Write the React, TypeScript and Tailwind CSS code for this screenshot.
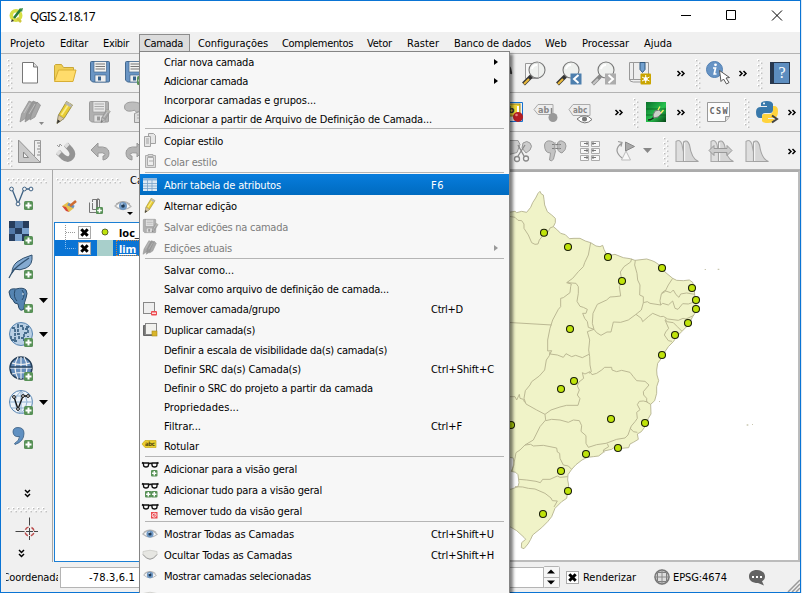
import { useLayoutEffect, useRef, useState } from "react";
import type { ReactNode } from "react";

/* A text run tracked in or out until it fills exactly w pixels. */
function Fit({ w, children }: { w: number; children: string }) {
  const ref = useRef<HTMLSpanElement>(null);
  const [tracking, setTracking] = useState(0);
  useLayoutEffect(() => {
    if (ref.current) setTracking((w - ref.current.getBoundingClientRect().width) / children.length);
  }, [w, children]);
  return (
    <span ref={ref} className="inline-block pt-[2px]" style={{ letterSpacing: `${tracking}px` }}>
      {children}
    </span>
  );
}

/* Every glyph slot uses window coordinates for its viewBox, so neighbouring slots tile seamlessly. */
function Slot({ x, y, w, h, children }: { x: number; y: number; w: number; h: number; children?: ReactNode }) {
  return (
    <svg className="block shrink-0" width={w} height={h} viewBox={`${x} ${y} ${w} ${h}`}>
      {children}
    </svg>
  );
}

function Grip({ x, y, n = 6 }: { x: number; y: number; n?: number }) {
  return (
    <g>
      {Array.from({ length: n }, (_, i) => (
        <g key={i}>
          <rect x={x} y={y + i * 5} width="2" height="2" fill="#fff" />
          <rect x={x + 1} y={y + 1 + i * 5} width="1.4" height="1.4" fill="#bcbcbc" />
          <rect x={x + 3} y={y + 2.5 + i * 5} width="2" height="2" fill="#fff" />
          <rect x={x + 4} y={y + 3.5 + i * 5} width="1.4" height="1.4" fill="#bcbcbc" />
        </g>
      ))}
    </g>
  );
}

function HGrip({ x, y, n }: { x: number; y: number; n: number }) {
  return (
    <g>
      {Array.from({ length: n }, (_, i) => (
        <g key={i}>
          <rect x={x + i * 5} y={y} width="2" height="2" fill="#fff" />
          <rect x={x + 1 + i * 5} y={y + 1} width="1.4" height="1.4" fill="#bcbcbc" />
          <rect x={x + 2.5 + i * 5} y={y + 3} width="2" height="2" fill="#fff" />
          <rect x={x + 3.5 + i * 5} y={y + 4} width="1.4" height="1.4" fill="#bcbcbc" />
        </g>
      ))}
    </g>
  );
}

function More({ x, y }: { x: number; y: number }) {
  return <path d={`M${x} ${y - 2.5}l2.5 2.5l-2.5 2.5M${x + 4} ${y - 2.5}l2.5 2.5l-2.5 2.5`} fill="none" stroke="#000" strokeWidth="1.5" />;
}

function MoreDown({ x, y }: { x: number; y: number }) {
  return <path d={`M${x - 2.5} ${y}l2.5 2.5l2.5 -2.5M${x - 2.5} ${y + 4}l2.5 2.5l2.5 -2.5`} fill="none" stroke="#000" strokeWidth="1.5" />;
}

function Plus({ x, y, s = 9 }: { x: number; y: number; s?: number }) {
  return (
    <g transform={`translate(${x} ${y}) scale(${s / 9})`}>
      <rect width="9" height="9" rx="1.5" fill="#589157" />
      <path d="M4.5 1.5v6M1.5 4.5h6" stroke="#fff" strokeWidth="2" />
    </g>
  );
}

function Floppy({ x, y, s = 1, gray = false }: { x: number; y: number; s?: number; gray?: boolean }) {
  const edge = gray ? "#9a9a9a" : "#43688f";
  const body = gray ? "#b0b0b0" : "#6a95c4";
  return (
    <g transform={`translate(${x} ${y}) scale(${s})`}>
      <path d="M.5 1.5q0-1 1-1h17q1 0 1 1v18.500q0 1-1 1h-16l-2-2z" fill={body} stroke={edge} />
      <rect x="4" y="0.500" width="12.500" height="10.500" fill={gray ? "#e6e6e6" : "#f2f2f0"} stroke={edge} strokeWidth=".7" />
      <path d="M5.500 3h9.500M5.500 5.500h9.500M5.500 8h9.500" stroke={gray ? "#aaa" : "#777"} />
      <rect x="5" y="14" width="11" height="7" fill={gray ? "#e0e0e0" : "#eee"} stroke={edge} strokeWidth=".7" />
      <rect x="8" y="15.500" width="3" height="4" fill={gray ? "#999" : "#35618f"} />
    </g>
  );
}

function Pencil({ x, y, s = 1, gray = false }: { x: number; y: number; s?: number; gray?: boolean }) {
  return (
    <g transform={`translate(${x} ${y}) scale(${s})`}>
      <path d="M0 22.500L1.500 14L9.500 .5l6 3.500L7 17.500z" fill={gray ? "#a3a3a3" : "#e8cc33"} stroke={gray ? "#898989" : "#8d8135"} strokeWidth=".8" />
      <path d="M4.500 14L12.500 2" stroke={gray ? "#c9c9c9" : "#f9ec8b"} strokeWidth="1.800" />
      <path d="M9.500 .5l6 3.500-1.600 2.600-6-3.600z" fill="#b6b6b0" />
      <path d="M1.500 14l5.500 3.500L0 22.500z" fill={gray ? "#bbb" : "#d8c6a0"} stroke="#777" strokeWidth=".5" />
      <path d="M0 22.500l.7-4 2.600 1.700z" fill="#333" fillOpacity={gray ? 0.4 : 1} />
    </g>
  );
}

function Pencils({ x, y, s = 1 }: { x: number; y: number; s?: number }) {
  return (
    <g transform={`translate(${x} ${y}) scale(${s})`} fill="#a8a8a8" stroke="#8c8c8c" strokeWidth=".7">
      <path d="M0 22l1.500-8L9 1l5 2L6 18z" />
      <path d="M5 22l1.500-8L13 1l5 2L11 18z" fill="#999" />
      <path d="M10 20l1.500-6L17 2l3.500 3L15 17z" />
      <path d="M4 13L10 3M9 14L15 4" stroke="#cecece" />
    </g>
  );
}

function Magnifier({ x, y, gray = false }: { x: number; y: number; gray?: boolean }) {
  return (
    <g>
      <path d={`M${x - 5.500} ${y + 6}l-8 8`} stroke={gray ? "#888" : "#333"} strokeWidth="4" />
      <path d={`M${x - 8} ${y + 9}l-5 5`} stroke={gray ? "#c4c4c4" : "#e8b83b"} strokeWidth="2.200" />
      <circle cx={x} cy={y} r="8" fill="#eef0ed" fillOpacity=".86" stroke="#777" strokeWidth="1.100" />
      <path d={`M${x - 5} ${y - 1}q1-4 5-4`} fill="none" stroke="#fff" strokeWidth="2" />
    </g>
  );
}

function Eye({ x, y, s = 1, closed = false }: { x: number; y: number; s?: number; closed?: boolean }) {
  return (
    <g transform={`translate(${x} ${y}) scale(${s})`}>
      {closed ? (
        <g>
          <path d="M-7-3.500Q0-6 7-3.500L7 0Q0 8-7 0z" fill="#e6e6e2" stroke="#c8c8c4" strokeWidth=".7" />
          <path d="M-7-.5Q0 9 7-.5" fill="none" stroke="#999" strokeWidth=".9" />
        </g>
      ) : (
        <g>
          <path d="M-8 0Q0-8 8 .5Q0 7-8 0z" fill="#fafafa" stroke="#b6b6b6" strokeWidth="1.200" />
          <circle r="4" fill="#6f98c4" />
          <circle r="1.800" fill="#203850" />
          <circle cx="-1" cy="-2" r=".8" fill="#dceaf8" />
          <path d="M-7-2Q0-7 7-2" fill="none" stroke="#999" strokeWidth=".8" />
        </g>
      )}
    </g>
  );
}

function Gripper({ x, w, y, h, gx }: { x: number; w: number; y: number; h: number; gx: number }) {
  return (
    <Slot x={x} y={y} w={w} h={h}>
      <Grip x={gx} y={y + 5} />
    </Slot>
  );
}

function FileBar() {
  const r = { y: 54, h: 38 };
  return (
    <div className="flex h-[39px] border-t border-[#b3b3b3]">
      <Gripper x={1} w={17} gx={7} {...r} />
      <Slot x={18} w={30} {...r}>
        <path d="M22.500 62.500h11l4 4.500v16h-15z" fill="#fff" stroke="#777" />
        <path d="M33.500 62.500v4.500h4" fill="#ddd" stroke="#777" />
      </Slot>
      <Slot x={48} w={36} {...r}>
        <path d="M54.500 80.500v-15l1-1h6l2 3h10v3" fill="#f0cf54" stroke="#c9a738" />
        <path d="M54.500 81.500l4-11.500h17.500l-3 11.500z" fill="#ffdc6b" stroke="#d8ae34" />
      </Slot>
      <Slot x={84} w={34} {...r}><Floppy x={90} y={61} /></Slot>
      <Slot x={118} w={391} {...r}><Floppy x={125} y={61} /><Plus x={137} y={76} /></Slot>
      <Slot x={509} w={41} {...r}>
        <path d="M504 62q8 5 7 12" fill="none" stroke="#444" strokeWidth="2" />
        <path d="M525.500 63.500h13v15h-13z" fill="#f7f7f7" stroke="#999" />
        <Magnifier x={537} y={70} />
        <path d="M538.500 62.500v15" stroke="#ccc" />
      </Slot>
      <Slot x={550} w={36} {...r}>
        <Magnifier x={571} y={70} />
        <rect x="570.500" y="73.500" width="11" height="11" fill="#4d7fae" /><path d="M578.500 75l-4.500 4 4.500 4" fill="none" stroke="#fff" strokeWidth="2" />
      </Slot>
      <Slot x={586} w={36} {...r}>
        <Magnifier x={606} y={70} gray />
        <rect x="605" y="73.500" width="11" height="11" fill="#adadad" /><path d="M608.500 75l4.500 4-4.500 4" fill="none" stroke="#fff" strokeWidth="2" />
      </Slot>
      <Slot x={622} w={68} {...r}>
        <path d="M629.500 62.500h4v17h-4zM633.500 62.500h15v17h-15z" fill="#eee" stroke="#999" />
        <path d="M629.500 79q0 3 4 3h8" fill="none" stroke="#999" />
        <path d="M640 62.500h5v7l-2.500 3-2.500-3z" fill="#72a0ce" stroke="#31587e" />
        <rect x="640.500" y="73.500" width="10.500" height="11" rx="1" fill="#caa500" />
        <path d="M645.700 75v8M642 77l7.500 4M642 81l7.500-4" stroke="#fff" /><circle cx="645.700" cy="79" r="2" fill="#fff" />
        <More x={677.5} y={73.500} />
      </Slot>
      <Gripper x={690} w={13} gx={695} {...r} />
      <Slot x={703} w={49} {...r}>
        <circle cx="714.500" cy="69.500" r="8" fill="#6794c5" stroke="#5180b3" />
        <circle cx="715.500" cy="64.800" r="1.400" fill="#fff" /><path d="M713 68h2.500l-1.300 6h2.300" fill="none" stroke="#fff" strokeWidth="1.700" />
        <path d="M719.500 70.500l1.500 11 2.500-2.500 3 5 2.500-1.500-3-4.500 3.500-.5z" fill="#fff" stroke="#555" />
        <More x={739.5} y={73.500} />
      </Slot>
      <Gripper x={752} w={13} gx={757} {...r} />
      <Slot x={765} w={35} {...r}>
        <rect x="770" y="62" width="20" height="22" fill="#28384e" /><rect x="774" y="63" width="15" height="20" fill="#5d8dbf" />
        <text x="782" y="78" textAnchor="middle" fill="#fff" fontSize="16" fontFamily="Liberation Serif, serif">?</text>
      </Slot>
    </div>
  );
}

function EditBar() {
  const r = { y: 93, h: 38 };
  return (
    <div className="flex h-[39px] border-t border-[#b3b3b3]">
      <Gripper x={1} w={17} gx={7} {...r} />
      <Slot x={18} w={32} {...r}><Pencils x={20} y={100} /><path d="M39 122h5l-2.500 3z" fill="#888" /></Slot>
      <Slot x={50} w={34} {...r}><Pencil x={57} y={101} /></Slot>
      <Slot x={84} w={34} {...r}><Floppy x={89} y={101} gray /><Pencil x={101} y={109} s={0.6} gray /></Slot>
      <Slot x={118} w={391} {...r}>
        <path d="M124.500 107q0-5 8-5 8 0 12 5v5h-8q-2-3-5-1-7 1-7-4z" fill="#bdbdbd" stroke="#9d9d9d" />
        <path d="M134.500 122.500v-9l5-2h6v11z" fill="#ddd" stroke="#999" /><path d="M137 115h8M137 118h8" stroke="#aaa" />
      </Slot>
      <Slot x={509} w={18} {...r}>
        <path d="M509 102.500h13.500v19h-13.500" fill="#f1f1f1" stroke="#1472d0" />
        <rect x="509" y="104" width="11" height="12" fill="#f0d737" stroke="#9d861a" />
        <text x="508" y="113" fontSize="9" fontWeight="bold" fontFamily="DejaVu Sans" fill="#333">b</text>
        <path d="M518 106v8" stroke="#fff" strokeWidth="2" /><circle cx="518" cy="117" r="5" fill="#b41d23" /><circle cx="516.500" cy="115" r="1.300" fill="#e48383" />
      </Slot>
      <Slot x={527} w={36} {...r}>
        <path d="M534 109.500l4-5h15v10h-15z" fill="#eee" stroke="#aaa" />
        <text x="538" y="113" fontSize="9" fontWeight="bold" fontFamily="DejaVu Sans Condensed" fill="#888">ab</text>
        <path d="M551.500 108v6" stroke="#888" strokeWidth="1.500" /><circle cx="553" cy="117.500" r="4.500" fill="#999" />
      </Slot>
      <Slot x={563} w={68} {...r}>
        <path d="M569 109.500l4-5h17v11h-17z" fill="#eee" stroke="#aaa" />
        <text x="573" y="113" fontSize="8" fontWeight="bold" fontFamily="DejaVu Sans Condensed" fill="#888">abc</text>
        <path d="M577 119q8-7 15 .5-7 7-15-.5z" fill="#fff" stroke="#777" /><circle cx="584.500" cy="119" r="2.500" fill="#777" />
        <More x={615.5} y={112.500} />
      </Slot>
      <Gripper x={631} w={13} gx={633} {...r} />
      <Slot x={644} w={47} {...r}>
        <defs><linearGradient id="terminal" x2="1" y2="1"><stop stopColor="#0a702b" /><stop offset=".55" stopColor="#28c24f" /><stop offset="1" stopColor="#064516" /></linearGradient></defs>
        <rect x="646" y="102" width="20" height="20" fill="url(#terminal)" />
        <path d="M646 109h20M646 115h20" stroke="#064718" strokeWidth=".6" />
        <path d="M648 120q5 0 7-5" fill="none" stroke="#142c19" strokeWidth="1.500" /><path d="M653 115l2-4 4-1 3 3-4 4-4 1z" fill="#ccd2c8" stroke="#777" /><path d="M658 110l2-3.500M661 113l2.500-3" stroke="#fff36a" strokeWidth="1.300" />
        <More x={677.5} y={112.500} />
      </Slot>
      <Gripper x={691} w={14} gx={695} {...r} />
      <Slot x={705} w={35} {...r}>
        <path d="M707.500 102.500h22v14l-4 5h-18z" fill="#fcfcfc" stroke="#999" /><path d="M725.500 121.500v-5h4" fill="#ddd" stroke="#999" />
        <text x="709.500" y="114" fontSize="8.500" fontWeight="bold" fontFamily="DejaVu Sans Mono" fill="#666" textLength="18">CSW</text>
      </Slot>
      <Gripper x={740} w={12} gx={744} {...r} />
      <Slot x={752} w={48} {...r}>
        <path d="M756 112q0-5 5-5h6v-1h-6v-3q1-2 6-2t6 3v6q0 3-3 3h-5q-3 0-3 3v2h-2q-4 0-4-6z" fill="#3979ab" />
        <path d="M778 111q0-5-4-5h-1v4q0 4-4 4h-5q-2 0-2 3v4q1 2 6 2 6 0 6-3v-1h-6v-1h6q4 0 4-7z" fill="#ffd33d" />
        <circle cx="764" cy="103.500" r="1" fill="#fff" />
        <path d="M772 115.500l5 3.500-5 3.500" fill="none" stroke="#444" strokeWidth="2" />
        <More x={788.5} y={112.500} />
      </Slot>
    </div>
  );
}

function Curve({ x }: { x: number }) {
  return (
    <g strokeWidth="1.100">
      <path d={`M${x} 161.500V141.500q4-3 6 3 2 15 9 17z`} fill="#dedede" stroke="#a9a9a9" />
      <path d={`M${x + 7.500} 161.500V142q4-3 6 3 2 14 9 16.500z`} fill="#d6d6d6" stroke="#a3a3a3" />
      <path d={`M${x + 8.600} 161V143`} stroke="#f5f5f5" />
    </g>
  );
}

function AdvancedBar() {
  const r = { y: 132, h: 37 };
  return (
    <div className="flex h-[38px] border-t border-[#b3b3b3]">
      <Gripper x={1} w={17} gx={7} {...r} />
      <Slot x={18} w={32} {...r}>
        <path d="M18.500 140l22 22.500h-22z" fill="#cacaca" stroke="#919191" /><path d="M23.500 152v5.500h5z" fill="#f0f0f0" stroke="#888" />
        <path d="M34.500 140.500h6v22l-6-6z" fill="#eee" stroke="#999" /><path d="M37 143h3M38 146h2M37 149h3M38 152h2M37 155h3" stroke="#888" />
      </Slot>
      <Slot x={50} w={34} {...r}>
        <path d="M58 152l5 5q5 4 8 .5t-.5-8l-4.500-5" fill="none" stroke="#949494" strokeWidth="5.600" />
        <path d="M57.500 151.500l2.500 2.500M65.500 144l2.500 2.500" stroke="#dedede" strokeWidth="4.600" />
        <path d="M57 145l2 2 1-3 2 2" fill="none" stroke="#999" />
      </Slot>
      <Slot x={84} w={34} {...r}><path d="M91 150l7-7v4q11-1 11 6 0 6-6 7v-4q3 0 2-2-2-2-7-1v4z" fill="#b3b3b3" stroke="#999" /></Slot>
      <Slot x={118} w={391} {...r}><path d="M144 150l-7-7v4q-11-1-11 6 0 6 6 7v-4q-3 0-2-2 2-2 7-1v4z" fill="#b3b3b3" stroke="#999" /></Slot>
      <Slot x={509} w={30} {...r}>
        <path d="M504 140.500h14l2 4-3 8-8 2zM523 143q4-3 7 0t0 7l-4 3-4-5z" fill="#ccc" stroke="#999" />
        <path d="M518 145l6 11M525 145l-7 11" stroke="#888" strokeWidth="1.300" /><circle cx="517" cy="159" r="2.500" fill="#f2f2f2" stroke="#888" strokeWidth="1.300" /><circle cx="526" cy="158.500" r="2.500" fill="#f2f2f2" stroke="#888" strokeWidth="1.300" />
      </Slot>
      <Slot x={539} w={34} {...r}>
        <path d="M544.500 145q1-5 6-4t4 5 1 5l-2 8-2 2-2-1 1-7q-6 0-6-8z" fill="#c4c4c4" stroke="#9b9b9b" />
        <path d="M557 145q1-5 5-4 4 1 4 5t-4 7q-5-1-5-8z" fill="#c4c4c4" stroke="#9b9b9b" />
        <path d="M552 144.500h9M552 148.500h9" stroke="#808080" /><path d="M555 142v8M559 142v8" stroke="#aaa" />
      </Slot>
      <Slot x={573} w={38} {...r}>
        {[141, 148, 155].map((y) => <g key={y}><path d={`M580.500 ${y}.500h8v5h-8zM591.500 ${y}.500h8v5h-8z`} fill="#f8f8f8" stroke="#ababab" /><path d={`M584 ${y + 2}.500h4M592 ${y + 2}.500h4M587 ${y + 1}v3M593 ${y + 1}v3`} fill="none" stroke="#777" /></g>)}
      </Slot>
      <Slot x={611} w={46} {...r}>
        <path d="M625.500 142v9l9-4.500z" fill="#aaa" stroke="#888" /><path d="M621.500 160h9l-4.500-9z" fill="#f8f8f8" stroke="#bbb" />
        <path d="M622 158q-10-8 0-15M618 141.500l4 1-1 4" fill="none" stroke="#999" strokeWidth="1.200" /><path d="M643 148h9l-4.500 5z" fill="#888" />
      </Slot>
      <Gripper x={657} w={14} gx={663} {...r} />
      <Slot x={671} w={34} {...r}><Curve x={676} /></Slot>
      <Slot x={705} w={35} {...r}><Curve x={711} /><path d="M709 150.500l5-5v3h13v-3l5 5-5 5v-3h-13v3z" fill="#ccc" stroke="#999" /></Slot>
      <Slot x={740} w={60} {...r}><Curve x={746} /><More x={788.5} y={151.500} /></Slot>
    </div>
  );
}

function SideBar() {
  const c = { x: 1, w: 51 };
  return (
    <div className="flex w-[52px] shrink-0 flex-col border-r border-[#a8a8a8]">
      <Slot {...c} y={170} h={14}><HGrip x={7} y={178} n={8} /></Slot>
      <Slot {...c} y={184} h={32}>
        <path d="M12 189l6 15 6-15h6" fill="none" stroke="#3f6284" strokeWidth="1.300" />
        {[[11.500, 189], [18, 204], [24.500, 189], [31, 189]].map(([x, y]) => <circle key={`${x}`} cx={x} cy={y} r="1.900" fill="#f4f4f4" stroke="#3f6284" />)}
        <Plus x={24} y={201} />
      </Slot>
      <Slot {...c} y={216} h={33}>
        <rect x="9" y="221" width="20" height="20" fill="#7ba3cf" />
        <path d="M9 221h6v7h-6zM23 221h6v7h-6zM15 228h7v6h-7zM9 234h6v7h-6zM22 234h7v7h-7z" fill="#263d5d" />
        <path d="M15 221h8v7h-8zM9 228h6v6h-6z" fill="#5178a7" />
        <Plus x={24} y={236} />
      </Slot>
      <Slot {...c} y={249} h={34}>
        <path d="M12 273q0-7 5-11 5-4 15-7 1 10-6 13-6 3-12 1z" fill="#84aad1" stroke="#31516f" />
        <path d="M9 278q4-8 9-12 5-4 11-8" fill="none" stroke="#31516f" strokeWidth="1.200" />
        <Plus x={24} y={270} />
      </Slot>
      <Slot {...c} y={283} h={34}>
        <path d="M9 292q1-4 7-3 7-2 10 1 2 3 0 8-2 4-2 11-5 4-6-5-4 0-5-4-3-1-4-8z" fill="#5584b1" stroke="#294a69" />
        <path d="M15 290q-2 7 2 11M22 290q4 5 0 10" fill="none" stroke="#294a69" /><circle cx="23" cy="294" r=".8" fill="#fff" />
        <Plus x={24} y={304} /><path d="M39 298h9l-4.500 5z" />
      </Slot>
      <Slot {...c} y={317} h={34}>
        <circle cx="21" cy="334" r="11.500" fill="#b9cfe4" stroke="#5785b1" />
        <path d="M12 328h3v3h3v-5h5v3h5v4h-4v5h-5v-4h-4v6h-4v-4M23 340h5v-4M18 326v-2M26 327h3M14 341h4" fill="none" stroke="#456b8c" strokeWidth="1.800" strokeDasharray="3 1" />
        <Plus x={24} y={338} /><path d="M39 332h9l-4.500 5z" />
      </Slot>
      <Slot {...c} y={351} h={34}>
        <circle cx="21" cy="368" r="11" fill="#678fbd" stroke="#243e58" strokeWidth="1.500" />
        <path d="M10 368h22M21 357v22M12 363q9 3 18 0M12 374q9-3 18 0M18 357q-6 10 0 22M24 357q6 10 0 22" fill="none" stroke="#f2f2f2" strokeWidth="1.100" /><path d="M10 367h22" stroke="#234261" strokeWidth="1.500" />
        <Plus x={24} y={372} />
      </Slot>
      <Slot {...c} y={385} h={34}>
        <circle cx="21" cy="402" r="11.500" fill="#edf3f9" stroke="#5684b1" /><path d="M10 402h23M21 391v23M12 396h18M12 408h18M21 391q-12 10 0 23M21 391q12 10 0 23" fill="none" stroke="#8fb1d1" />
        <path d="M14 397l4 12 5-13h5" fill="none" stroke="#111" strokeWidth="1.300" />
        {[[14, 397], [18, 409], [23, 396], [28, 396]].map(([x, y]) => <circle key={`${x}`} cx={x} cy={y} r="1.400" fill="#fff" stroke="#111" />)}
        <Plus x={24} y={406} /><path d="M39 400h9l-4.500 5z" />
      </Slot>
      <Slot {...c} y={419} h={68}>
        <path d="M13 432q0-4.500 5-4.500 6 0 6 6 0 8-9 11l-.5-1q5-3 5-7-6 1-6.500-4.500z" fill="#6090c1" stroke="#355b80" strokeWidth=".8" />
        <Plus x={24} y={440} />
      </Slot>
      <Slot {...c} y={487} h={20}><MoreDown x={27.500} y={490} /></Slot>
      <Slot {...c} y={507} h={55}>
        <HGrip x={7} y={507} n={8} />
        <path d="M15.500 531.500h9M34 531.500h4M29.500 517.500v8M29.500 536v4M26 531.500h7M29.500 528v7" stroke="#444" />
        <circle cx="29.500" cy="531.500" r="4.500" fill="none" stroke="#b94b4b" strokeWidth="1.500" strokeDasharray="4 3.070" strokeDashoffset="-1.500" />
        <MoreDown x={21.500} y={550} />
      </Slot>
    </div>
  );
}

function CheckedBox() {
  return (
    <svg className="block size-[13px] shrink-0" viewBox="0 0 13 13">
      <rect x=".5" y=".5" width="12" height="12" fill="#fff" stroke="#aaa" /><path d="M3.300 3.300l6.400 6.400M9.700 3.300l-6.400 6.400" stroke="#000" strokeWidth="3" />
    </svg>
  );
}

function LayersPanel() {
  return (
    <div className="flex w-[456px] shrink-0 flex-col pl-px">
      <div className="flex h-[22px] items-center">
        <Slot x={54} y={170} w={76} h={22}><HGrip x={56} y={178} n={13} /></Slot>
        <span>Ca</span>
      </div>
      <Slot x={54} y={192} w={120} h={30}>
        <path d="M62 206l6-4 6 6-5 4z" fill="#e7c14c" /><path d="M62 206l4 1 3 5-3-1z" fill="#d3463a" /><path d="M68 204l6 3" stroke="#658fc0" strokeWidth="3" /><path d="M70 206l6-5" stroke="#ce6b30" strokeWidth="2.500" />
        <path d="M89.500 202.500v10h7M92.500 202v-2.500h7M99.500 209v-9.500M92.500 203v6.500h7M96.500 213.500v-14l2-1M97.500 199v10" fill="none" stroke="#777" /><Plus x={96} y={207} s={7} />
        <Eye x={123} y={206} s={1} /><path d="M127 212h6l-3 3z" />
      </Slot>
      <div className="flex min-h-0 flex-1 flex-col border-y border-l border-[#1b7fd4] bg-white font-['Noto_Sans',sans-serif] text-[11px] font-bold">
        <div className="flex h-[17px] items-center pt-[2px]">
          <Slot x={55} y={224} w={23} h={17}><path d="M65.500 223v18M66 232.500h9" stroke="#999" strokeDasharray="1 1" /></Slot>
          <CheckedBox />
          <Slot x={91} y={224} w={28} h={17}><circle cx="105" cy="232" r="3" fill="#bfe30a" stroke="#5d6728" /></Slot>
          <span>loc_</span>
        </div>
        <div className="flex h-4 items-center bg-[#0a74d4] text-white">
          <Slot x={55} y={240} w={23} h={16}><path d="M65.500 240v8.500h10" fill="none" stroke="#8cc0ef" strokeDasharray="1 1" /></Slot>
          <CheckedBox />
          <Slot x={91} y={240} w={25} h={16}><rect x="97" y="240" width="16" height="16" fill="#a8cfcb" /></Slot>
          <span className="h-4 w-40 border border-dotted border-[#c98440] pl-[2px] leading-[15px] underline">lim</span>
        </div>
      </div>
    </div>
  );
}

const COAST =
  "20,128 45,124 50,128 65,124 80,127 92,112 98,98 107,84 114,70 120,64 124,72 130,75 132,88 134,105 142,125 155,135 166,145 166,158 160,170 170,178 182,190 196,194 208,206 222,205 240,205 256,213 272,218 288,228 300,230 308,226 312,238 318,250 330,256 345,253 370,263 390,266 405,271 440,267 456,272 465,276 478,285 484,292 495,306 518,325 530,331 550,332 568,330 578,337 583,355 584,375 588,395 588,425 578,440 565,465 545,485 530,500 520,515 505,530 495,545 488,560 473,580 470,600 471,615 476,632 470,650 470,670 464,692 452,703 453,732 445,745 438,766 424,785 412,792 415,808 400,817 390,822 386,833 365,835 340,834 335,838 312,843 310,847 296,858 280,860 262,862 246,870 228,884 215,898 204,914 203,930 206,945 200,985 185,995 165,1015 155,1040 143,1055 125,1073 98,1095 92,1108 84,1122 72,1136 64,1133 65,1118 77,1108 72,1102 50,1082 35,1073 20,1065 20,960 35,957 54,950 57,938 54,914 47,907 34,904 42,885 40,864 20,860";

const STATES = [
  "20,138 34,140 45,142 54,151 65,152 72,162 72,175 85,195 95,218 105,223 114,222 118,210 130,195 145,185 150,174 160,170",
  "272,218 265,255 254,278 250,290 235,305 218,325 200,338 214,342 212,350 210,368 190,383 182,385 182,410 175,418 158,450 150,475 143,510 143,543",
  "202,338 228,340 235,350 235,370 231,394 240,409 250,412 262,418 258,430 248,430 254,445 262,455 265,472 282,478",
  "395,266 392,276 372,290 361,306 366,333 358,350 362,378 345,380 330,381 320,390 292,403 279,430 277,460 282,478",
  "406,271 404,285 411,310 413,330 420,345 419,375 430,380 430,398",
  "518,325 505,345 495,365 484,372 480,392 482,405 450,400 442,395 430,398",
  "484,370 494,362 512,368 520,360 528,374 537,382 542,372 560,369 585,373",
  "482,405 488,400 505,405 518,393 525,415 534,418 548,401 565,402 586,395",
  "430,398 424,420 408,433 424,445 428,455 445,440 458,430 482,440 490,439 503,447 535,451 549,445 558,447 582,436",
  "282,478 290,488 303,496 321,486 333,486 340,456 362,457 385,450 408,433",
  "496,446 500,455 520,458 532,470 545,483",
  "495,450 506,475 497,486 493,495 505,512 516,514",
  "20,457 155,465",
  "143,543 155,542 150,552 172,555 190,562 198,551 215,560 227,556 247,563 267,553",
  "282,478 262,485 269,510 266,540 269,560 270,585 274,605 267,610",
  "150,545 148,557 139,570 134,600 118,618 95,635 90,645 76,662 72,685 78,702 110,720 135,733",
  "305,600 314,592 335,592 336,600 350,605 365,601 390,607 400,620 410,632 435,634 447,645 430,665 431,675 440,685 440,696 452,703",
  "305,600 290,610 276,614 270,605 255,612 247,608 251,625 237,636 232,648 238,660 232,675 240,686 234,706 200,706 180,711 153,720 135,733 137,750 120,770 100,810 75,825",
  "443,696 430,693 418,694 412,704 420,719 410,727 412,745 405,755 394,768 391,775 400,785 412,787",
  "392,773 384,795 375,804 350,808 318,820 290,824 265,832 258,820 258,797 243,784 245,767 238,752 220,750 205,757 180,750 155,748 137,752",
  "322,821 326,830 310,840 312,848",
  "75,825 92,823 100,828 130,826 170,834 172,846 179,850 180,865 190,885 205,888 215,898",
  "75,825 60,840 48,848 45,865 36,905",
  "57,928 80,930 108,934 121,938 128,928 150,928 172,918 180,922 203,920",
  "45,950 68,951 85,955 105,957 135,970 153,984 157,992 172,993 162,1011",
  "20,680 45,680 50,690 58,673 60,685 70,688 74,697",
];

const CAPITALS = [
  [132, 188], [204, 231], [324, 261], [366, 333], [486, 294], [576, 354], [588, 390], [588, 417], [564, 459], [525, 495], [486, 555],
  [210, 477], [222, 633], [183, 657], [333, 747], [435, 759], [258, 852], [354, 834], [183, 903], [204, 963], [129, 1032], [33, 765],
];

function MapCanvas() {
  return (
    <div className="min-w-0 flex-1 border-y-2 border-r-2 border-t-[#ababab] border-r-[#bcbcbc] border-b-[#bcbcbc] bg-white">
      <svg className="block" width="288" height="388" viewBox="509 172 288 388">
        <g transform="translate(500 170) scale(.33333)">
          <polygon points={COAST} fill="#f0f3c8" stroke="#b3b08c" strokeWidth="2.600" />
          {STATES.map((p) => <polyline key={p} points={p} fill="none" stroke="#b7b48f" strokeWidth="2.800" strokeLinejoin="round" />)}
          {CAPITALS.map(([x, y]) => <circle key={`${x}-${y}`} cx={x} cy={y} r="10.500" fill="#bfe30a" stroke="#1a1e08" strokeWidth="3.200" />)}
          <path d="M614 297h4v3h-4zM653 296h5v4h-5zM740 763h5v4h-5zM756 762h3v3h-3zM477 693h3v3h-3z" fill="#c9c7b0" />
        </g>
      </svg>
    </div>
  );
}

function StatusBar() {
  return (
    <div className="flex h-[30px] items-center text-black">
      <span className="ml-[5px] flex w-[52px] justify-center overflow-hidden whitespace-nowrap"><span className="shrink-0"><Fit w={59}>Coordenada</Fit></span></span>
      <div className="ml-[2px] flex h-[21px] w-[484px] items-center border border-[#b4b4b4] bg-white pl-[28px]"><Fit w={46}>-78.3,6.1</Fit></div>
      <Slot x={544} y={562} w={20} h={30}>
        <rect x="543.500" y="566.500" width="16" height="21" rx="1" fill="#f6f6f6" stroke="#b4b4b4" /><path d="M544 577.500h15" stroke="#b4b4b4" />
        <path d="M547 573.500h8l-4-4zM547 580.500h8l-4 4z" />
      </Slot>
      <span className="ml-[2px]"><CheckedBox /></span>
      <span className="ml-1 w-[70px]"><Fit w={53}>Renderizar</Fit></span>
      <Slot x={653} y={562} w={20} h={30}>
        <circle cx="662" cy="577" r="7" fill="#c4c4c4" stroke="#777" strokeWidth="1.500" /><path d="M657.500 572.500h9v9h-9z" fill="#ddd" stroke="#7d7d7d" />
        <path d="M654 577h16M662 569v16" stroke="#8a8a8a" />
      </Slot>
      <span className="w-[74px]"><Fit w={54}>EPSG:4674</Fit></span>
      <Slot x={747} y={562} w={36} h={30}>
        <path d="M757 570c5 0 8 3 8 6.500 0 2-1 3.500-3 4.700l2 4.300-6-2.500c-6 0-9-2.500-9-6.500s3-6.500 8-6.500z" fill="#636363" /><path d="M752 576h2v2h-2zM756 576h2v2h-2zM760 576h2v2h-2z" fill="#fff" />
      </Slot>
      <Slot x={783} y={562} w={17} h={30}><path d="M788 592l12-12M792 592l8-8M796 592l4-4" stroke="#999" strokeWidth="1.500" /></Slot>
    </div>
  );
}

type Entry = { text: string; w: number; key?: string; kw?: number; icon?: ReactNode; tall?: boolean; off?: boolean; on?: boolean; sub?: boolean };

function Glasses() {
  return (
    <g fill="none" stroke="#111">
      <path d="M3.500 5h5v2q0 2-2.500 2T3.500 7zM12 5h5v2q0 2-2.500 2T12 7z" strokeWidth="1.300" />
      <path d="M8.500 6q1.700-1.500 3.500 0M3.500 5.500L2 4.500M17 5.500l1.500-1" strokeWidth="1.600" />
    </g>
  );
}

const MENU: (Entry | null)[] = [
  { text: "Criar nova camada", w: 90, sub: true },
  { text: "Adicionar camada", w: 84, sub: true },
  { text: "Incorporar camadas e grupos...", w: 152 },
  { text: "Adicionar a partir de Arquivo de Definição de Camada...", w: 268 },
  null,
  { text: "Copiar estilo", w: 59, tall: true, icon: <g fill="#e6e6e6" stroke="#a2a2a2"><path d="M8.500 3.500h5l2 2v8h-7z" /><path d="M4.500 6.500h6v10h-6z" /><path d="M6 9h3M6 11h3M6 13h3" /></g> },
  { text: "Colar estilo", w: 53, tall: true, off: true, icon: <g fill="#dcdcdc" stroke="#adadad"><path d="M5.500 4.500h10v12h-10z" /><path d="M7.500 6.500h6v8h-6z" fill="#eee" /><path d="M8 3.500h5v2H8zM9 10h4" /></g> },
  null,
  { text: "Abrir tabela de atributos", w: 117, key: "F6", kw: 13, tall: true, on: true, icon: <g><rect x="3" y="4" width="14" height="13" fill="#dce9f4" /><rect x="3" y="4" width="14" height="2.500" fill="#8fb5d9" /><path d="M3 9.500h14M3 12h14M3 14.500h14M7.500 6v11M12 6v11" stroke="#7aa2c8" strokeWidth=".8" /></g> },
  { text: "Alternar edição", w: 73, tall: true, icon: <Pencil x={5} y={3} s={0.65} /> },
  { text: "Salvar edições na camada", w: 124, tall: true, off: true, icon: <g><Floppy x={3} y={3} s={0.65} gray /><Pencil x={12} y={7} s={0.4} gray /></g> },
  { text: "Edições atuais", w: 68, tall: true, off: true, sub: true, icon: <Pencils x={3} y={3} s={0.65} /> },
  null,
  { text: "Salvar como...", w: 70 },
  { text: "Salvar como arquivo de definição de camada...", w: 225 },
  { text: "Remover camada/grupo", w: 116, key: "Ctrl+D", kw: 32, tall: true, icon: <g><rect x="3.500" y="4.500" width="11" height="11" fill="#eee" stroke="#888" /><rect x="11" y="13" width="6" height="4.500" rx="1" fill="#ed4b50" /><path d="M12 15.200h4" stroke="#fff" strokeWidth="1.200" /></g> },
  { text: "Duplicar camada(s)", w: 91, tall: true, icon: <g><path d="M3.500 6.500h11v10h-11z" fill="#777" stroke="#666" /><rect x="5.500" y="4.500" width="11" height="11" fill="#f1f1ee" stroke="#888" /><rect x="12" y="12" width="5" height="5" fill="#d9b52b" stroke="#a88a1a" strokeWidth=".6" /></g> },
  { text: "Definir a escala de visibilidade da(s) camada(s)", w: 223 },
  { text: "Definir SRC da(s) Camada(s)", w: 137, key: "Ctrl+Shift+C", kw: 63 },
  { text: "Definir o SRC do projeto a partir da camada", w: 209 },
  { text: "Propriedades...", w: 75 },
  { text: "Filtrar...", w: 37, key: "Ctrl+F", kw: 31 },
  { text: "Rotular", w: 35, tall: true, icon: <g><path d="M2 9l3-3.500h11v7H5z" fill="#ebcf2e" stroke="#c5a91b" strokeWidth=".7" /><text x="5" y="11.200" fontSize="6" textLength="10" fontWeight="bold" fontFamily="DejaVu Sans Condensed" fill="#554a10">abc</text></g> },
  null,
  { text: "Adicionar para a visão geral", w: 133, tall: true, icon: <g><Glasses /><Plus x={11} y={12} s={6.5} /></g> },
  { text: "Adicionar tudo para a visão geral", w: 158, tall: true, icon: <g><Glasses /><Plus x={5} y={12} s={6.5} /><Plus x={11} y={12} s={6.5} /></g> },
  { text: "Remover tudo da visão geral", w: 138, tall: true, icon: <g><Glasses /><rect x="11" y="12" width="6.500" height="6.500" fill="#e9484d" /><circle cx="14.200" cy="15.200" r="2" fill="none" stroke="#fff" strokeWidth=".8" /><path d="M12.500 17l3.500-3.500" stroke="#fff" strokeWidth=".7" /></g> },
  null,
  { text: "Mostrar Todas as Camadas", w: 130, key: "Ctrl+Shift+U", kw: 63, tall: true, icon: <Eye x={10} y={11} s={0.9} /> },
  { text: "Ocultar Todas as Camadas", w: 128, key: "Ctrl+Shift+H", kw: 63, tall: true, icon: <Eye x={10} y={11} closed /> },
  { text: "Mostrar camadas selecionadas", w: 147, tall: true, icon: <Eye x={10} y={10} s={0.8} /> },
  { text: "Ocultar camadas selecionadas", w: 145, tall: true, icon: <Eye x={10} y={11} closed /> },
];

function LayerMenu() {
  return (
    <div className="absolute left-[139px] top-[51px] h-[560px] w-[371px] border border-[#858585] bg-[#f7f7f7] shadow-[3px_3px_3px_rgba(0,0,0,0.5)]">
      {MENU.map((m, i) =>
        m ? (
          <div
            key={m.text}
            className={`flex items-center ${m.tall ? "h-[21px]" : "h-[19px]"} ${m.on ? "bg-gradient-to-b from-[#087ddd] to-[#006bc0] text-white" : m.off ? "text-[#7d7d7d]" : "text-black"}`}
          >
            <svg className="block shrink-0" width="20" height="21" viewBox="0 0 20 21">{m.icon}</svg>
            <span className="ml-1 w-[267px] shrink-0"><Fit w={m.w}>{m.text}</Fit></span>
            {m.key && <Fit w={m.kw ?? 30}>{m.key}</Fit>}
            {m.sub && <svg className="ml-[62px] block" width="6" height="8" viewBox="0 0 6 8"><path d="M1 1l4 3-4 3z" fill={m.off ? "#999" : "#000"} /></svg>}
          </div>
        ) : (
          <div key={i} className="ml-[5px] mr-[5px] h-[2px] border-t border-[#b5b5b5]" />
        ),
      )}
    </div>
  );
}

function MenuBar() {
  return (
    <div className="flex h-[21px] items-center pl-[9px]">
      <span className="w-[50px]"><Fit w={35}>Projeto</Fit></span>
      <span className="w-[43px]"><Fit w={28}>Editar</Fit></span>
      <span className="w-[36px]"><Fit w={26}>Exibir</Fit></span>
      <span className="flex h-[18px] w-[51px] items-center border border-[#8d8d8d] bg-[#dcdcdc] pl-[4px]"><Fit w={39}>Camada</Fit></span>
      <span className="ml-[8px] w-[84px]"><Fit w={70}>Configurações</Fit></span>
      <span className="w-[85px]"><Fit w={71}>Complementos</Fit></span>
      <span className="w-[40px]"><Fit w={25}>Vetor</Fit></span>
      <span className="w-[47px]"><Fit w={32}>Raster</Fit></span>
      <span className="w-[91px]"><Fit w={77}>Banco de dados</Fit></span>
      <span className="w-[37px]"><Fit w={22}>Web</Fit></span>
      <span className="w-[62px]"><Fit w={47}>Processar</Fit></span>
      <Fit w={28}>Ajuda</Fit>
    </div>
  );
}

function TitleBar() {
  return (
    <div className="flex h-[31px] items-center bg-white">
      <Slot x={1} y={1} w={29} h={31}>
        <circle cx="16" cy="15.500" r="4.700" fill="none" stroke="#d6df45" strokeWidth="3.600" /><path d="M17 18l4 4" stroke="#d0c63c" strokeWidth="2.500" />
        <path d="M14 18l7-9" stroke="#287b39" strokeWidth="2.600" /><path d="M19 9l4-1-1 4z" fill="#3b9148" /><path d="M12 19l-1 3 3-1z" fill="#333" />
      </Slot>
      <span className="w-[650px] pb-[2px] font-['Noto_Sans',sans-serif] text-[12px]"><Fit w={65}>QGIS 2.18.17</Fit></span>
      <Slot x={680} y={1} w={120} h={31}>
        <path d="M681 15.500h10M726.500 10.500h9v9h-9zM772 10.500l10 10M782 10.500l-10 10" fill="none" stroke="#000" />
      </Slot>
    </div>
  );
}

export default function App() {
  return (
    <div className="relative h-[593px] w-[802px] overflow-hidden whitespace-nowrap bg-[#dfe9f3] font-['DejaVu_Sans_Condensed','DejaVu_Sans',sans-serif] text-[11px] leading-[14px] text-black">
      <div className="flex h-[593px] w-[801px] flex-col border border-[#0a74d4] bg-[#f0f0f0]">
        <TitleBar />
        <MenuBar />
        <FileBar />
        <EditBar />
        <AdvancedBar />
        <div className="flex min-h-0 flex-1 border-t border-[#b3b3b3]">
          <SideBar />
          <LayersPanel />
          <MapCanvas />
        </div>
        <StatusBar />
      </div>
      <LayerMenu />
    </div>
  );
}
